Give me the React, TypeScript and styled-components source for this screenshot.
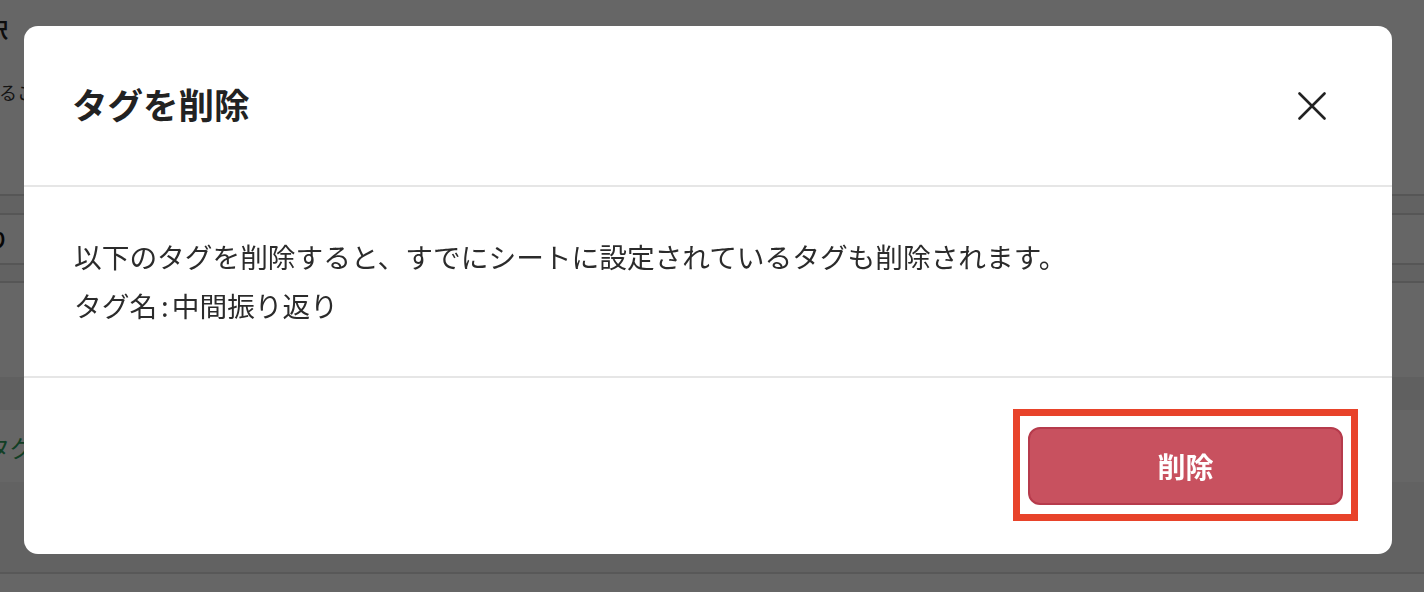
import React from "react";
import styled, { createGlobalStyle } from "styled-components";

const GlobalStyle = createGlobalStyle`
  html, body {
    margin: 0;
    padding: 0;
    width: 1424px;
    height: 592px;
    overflow: hidden;
    background: #ffffff;
  }
  * { box-sizing: border-box; }
  body {
    font-family: "Noto Sans CJK JP", "Noto Sans", sans-serif;
    color: #333333;
  }
`;

/* ---------- underlying page (mostly hidden by the dialog) ---------- */

const Page = styled.div`
  width: 1424px;
  height: 592px;
  display: flex;
  flex-direction: column;
  background: #ffffff;
  overflow: hidden;
`;

const PageInner = styled.div`
  display: flex;
  flex-direction: column;
  margin-left: -160px;
  width: 1584px;
`;

const PageHeading = styled.h1`
  margin: 16px 0 0;
  height: 28px;
  font-size: 20px;
  line-height: 28px;
  font-weight: 700;
  color: #222;
  padding-left: 68px;
  white-space: nowrap;
`;

const PageLead = styled.p`
  margin: 34px 0 0;
  height: 28px;
  font-size: 18px;
  line-height: 28px;
  color: #333;
  padding-left: 51px;
  white-space: nowrap;
`;

const Table = styled.div`
  margin-top: 88px;
  display: flex;
  flex-direction: column;
`;

const TableRow = styled.div<{ $h: number; $shade?: boolean }>`
  height: ${(p) => p.$h}px;
  border-top: 2px solid #d8d8d8;
  background: ${(p) => (p.$shade ? "#f4f4f4" : "#ffffff")};
  display: flex;
  align-items: center;
  font-size: 20px;
  font-weight: 700;
  color: #111;
  padding-left: 48px;
  white-space: nowrap;
`;

const TableEnd = styled.div`
  border-top: 2px solid #d8d8d8;
`;

const Band = styled.div<{ $h: number; $bg: string }>`
  height: ${(p) => p.$h}px;
  background: ${(p) => p.$bg};
  display: flex;
  align-items: center;
`;

const GreenLink = styled.span`
  font-size: 24px;
  color: #2f9d5c;
  padding-left: 146px;
  white-space: nowrap;
`;

const BottomLine = styled.div`
  border-top: 2px solid #dcdcdc;
  flex: 1;
  background: #ffffff;
`;

/* ---------- dialog ---------- */

const Overlay = styled.div`
  position: fixed;
  inset: 0;
  background: rgba(0, 0, 0, 0.6);
  display: flex;
  padding: 26px 32px 38px 24px;
`;

const Modal = styled.div`
  width: 1368px;
  height: 528px;
  background: #ffffff;
  border-radius: 14px;
  display: flex;
  flex-direction: column;
`;

const ModalHeader = styled.div`
  height: 161px;
  flex: none;
  border-bottom: 2px solid #e6e6e6;
  display: flex;
  align-items: center;
  justify-content: space-between;
  padding: 0 66px 0 48px;
`;

const Title = styled.h2`
  margin: 0 0 4px;
  font-size: 35.5px;
  line-height: 48px;
  font-weight: 700;
  color: #222222;
`;

const CloseButton = styled.button`
  width: 28px;
  height: 28px;
  padding: 0;
  border: none;
  background: transparent;
  display: flex;
  align-items: center;
  justify-content: center;
  cursor: pointer;
`;

const ModalBody = styled.div`
  flex: none;
  height: 189px;
  padding: 45px 50px 46px;
  font-size: 27.7px;
  line-height: 49px;
  color: #2b2b2b;
`;

const BodyLine = styled.p`
  margin: 0;
`;

const Colon = styled.span`
  margin: 0 3px 0 4px;
`;

const ModalFooter = styled.div`
  flex: 1;
  border-top: 2px solid #e6e6e6;
  display: flex;
  justify-content: flex-end;
  align-items: flex-start;
  padding: 49px 49px;
`;

const HighlightWrap = styled.div`
  position: relative;
  display: flex;
`;

const DangerButton = styled.button`
  width: 315px;
  height: 78px;
  border-radius: 12px;
  border: 2px solid #b63b4c;
  background: #c8515f;
  color: #ffffff;
  font-family: "Noto Sans CJK JP", "Noto Sans", sans-serif;
  font-size: 28px;
  font-weight: 700;
  cursor: pointer;
`;

const Highlight = styled.div`
  position: absolute;
  top: -18px;
  left: -15px;
  right: -15px;
  bottom: -16px;
  border: 7px solid #e8432a;
  pointer-events: none;
`;

export default function App() {
  return (
    <>
      <GlobalStyle />
      <Page aria-hidden="true">
        <PageInner>
          <PageHeading>タグの選択</PageHeading>
          <PageLead>タグを設定することができます</PageLead>
          <Table>
            <TableRow $h={19} $shade />
            <TableRow $h={50}>中間振り返り</TableRow>
            <TableRow $h={18} $shade />
            <TableEnd />
          </Table>
          <Band $h={94} $bg="#ffffff" />
          <Band $h={33} $bg="#f0f0f0" />
          <Band $h={72} $bg="#ffffff">
            <GreenLink>タグを追加</GreenLink>
          </Band>
          <Band $h={90} $bg="#f4f4f4" />
          <BottomLine />
        </PageInner>
      </Page>
      <Overlay>
        <Modal role="dialog" aria-labelledby="dlg-title">
          <ModalHeader>
            <Title id="dlg-title">タグを削除</Title>
            <CloseButton aria-label="閉じる">
              <svg width="28" height="28" viewBox="0 0 28 28" fill="none">
                <path
                  d="M1.5 1.5 L26.5 26.5 M26.5 1.5 L1.5 26.5"
                  stroke="#222222"
                  strokeWidth="2.6"
                  strokeLinecap="round"
                />
              </svg>
            </CloseButton>
          </ModalHeader>
          <ModalBody>
            <BodyLine>
              以下のタグを削除すると、すでにシートに設定されているタグも削除されます。
            </BodyLine>
            <BodyLine>
              タグ名<Colon>:</Colon>中間振り返り
            </BodyLine>
          </ModalBody>
          <ModalFooter>
            <HighlightWrap>
              <DangerButton>削除</DangerButton>
              <Highlight />
            </HighlightWrap>
          </ModalFooter>
        </Modal>
      </Overlay>
    </>
  );
}
